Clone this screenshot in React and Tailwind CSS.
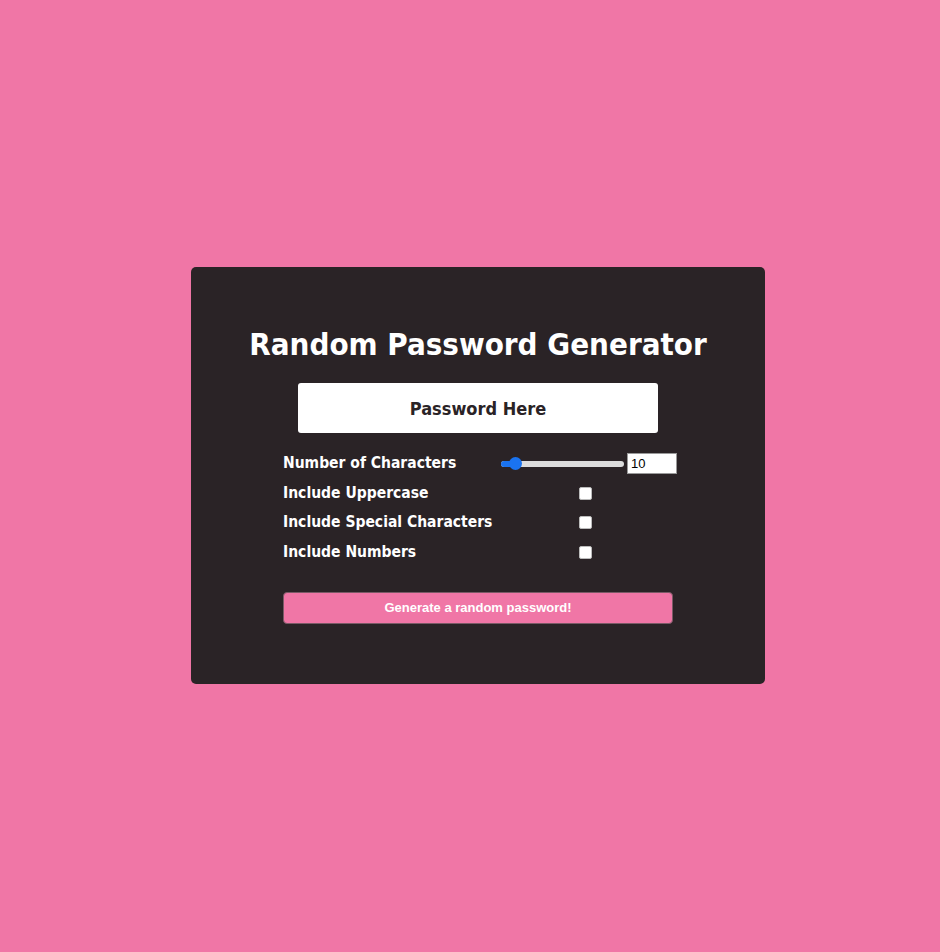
export default function App() {
  const tahoma = { fontFamily: '"DejaVu Sans Condensed", "DejaVu Sans", sans-serif' };
  return (
    <div className="min-h-[952px] w-full bg-[#f076a6] flex justify-center pt-[267px] pl-[16px]">
      <div className="w-[574px] h-[417px] bg-[#2a2326] rounded-[5px] flex flex-col items-center pt-[58px]" style={tahoma}>
        <h1 className="text-white font-bold text-[31px] leading-[38px]">Random Password Generator</h1>
        <div className="mt-[20px] w-[360px] h-[50px] bg-white rounded-[3px] flex items-center justify-center text-[#2a2326] font-bold text-[18px]">
          Password Here
        </div>
        <div className="mt-[16px] w-[390px] grid grid-cols-[218px_1fr] auto-rows-[29.5px] items-center text-white font-bold text-[15.5px]">
          <div>Number of Characters</div>
          <div className="flex items-center">
            <div className="relative w-[123px] h-[6px] rounded-full bg-[#dcdcdc]">
              <div className="absolute left-0 top-0 h-full w-[14px] rounded-l-full bg-[#1a73f0]" />
              <div className="absolute left-[8px] top-[-3.5px] w-[13px] h-[13px] rounded-full bg-[#1a73f0]" />
            </div>
            <div className="ml-[3px] w-[50px] h-[21px] bg-white border border-[#999] flex items-center pl-[3px] text-[13px] font-normal text-black" style={{ fontFamily: '"Liberation Sans", Arial, sans-serif' }}>
              10
            </div>
          </div>
          <div>Include Uppercase</div>
          <div className="flex justify-center pr-[8px]"><span className="block w-[13px] h-[13px] bg-white rounded-[2px] border border-[#bbb]" /></div>
          <div>Include Special Characters</div>
          <div className="flex justify-center pr-[8px]"><span className="block w-[13px] h-[13px] bg-white rounded-[2px] border border-[#bbb]" /></div>
          <div>Include Numbers</div>
          <div className="flex justify-center pr-[8px]"><span className="block w-[13px] h-[13px] bg-white rounded-[2px] border border-[#bbb]" /></div>
        </div>
        <button className="mt-[25px] w-[390px] h-[32px] bg-[#f076a6] rounded-[4px] border border-[#7a5a66] text-white font-bold text-[13px]" style={{ fontFamily: '"Liberation Sans", Arial, sans-serif' }}>
          Generate a random password!
        </button>
      </div>
    </div>
  );
}
